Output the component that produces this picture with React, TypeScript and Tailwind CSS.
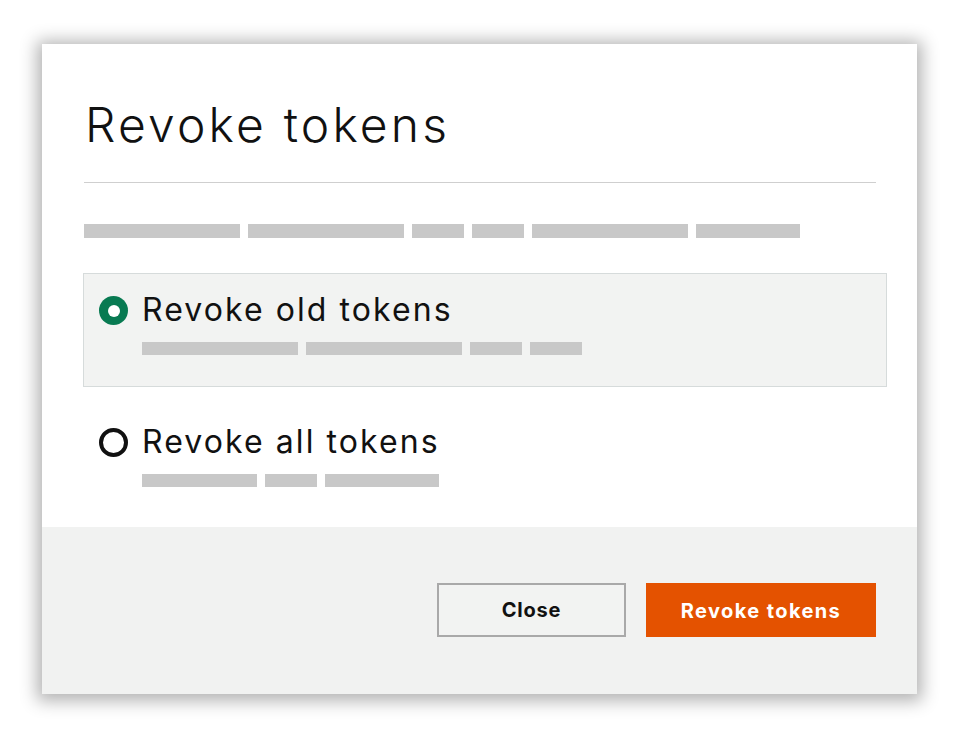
import React from "react";

const Bar = ({ w, h = 14 }: { w: number; h?: number }) => (
  <div className="bg-[#c8c8c8]" style={{ width: w, height: h }} />
);

export default function App() {
  return (
    <div
      className="w-[959px] h-[736px] bg-white pt-[44px] pl-[42px]"
      style={{ fontFamily: "Inter, 'Noto Sans', sans-serif" }}
    >
      <div className="w-[875px] h-[650px] flex flex-col shadow-[0_2px_16px_5px_rgba(0,0,0,0.3)]">
        <div className="flex-1 bg-white pt-[52px] pl-[42px] pr-[30px]">
          <h1 className="text-[48px] leading-[58px] font-light tracking-[0.066em] text-[#111] pl-[1px]">
            Revoke tokens
          </h1>
          <div className="mt-[28px] h-px bg-[#cfcfcf] mr-[11px]" />
          <div className="mt-[41px] flex gap-[8px]">
            <Bar w={156} />
            <Bar w={156} />
            <Bar w={52} />
            <Bar w={52} />
            <Bar w={156} />
            <Bar w={104} />
          </div>
          <div className="mt-[35px] -ml-px border border-[#d6dbdb] bg-[#f2f3f2] h-[114px] pt-[16px] pl-[15px]">
            <div className="flex items-start gap-[14px]">
              <div className="mt-[6px] w-[29px] h-[29px] rounded-full bg-[#087a52] flex items-center justify-center">
                <div className="w-[12px] h-[12px] rounded-full bg-white" />
              </div>
              <div>
                <div className="text-[32px] leading-[40px] tracking-[0.065em] text-[#111]">Revoke old tokens</div>
                <div className="mt-[12px] flex gap-[8px]">
                  <Bar w={156} h={13} />
                  <Bar w={156} h={13} />
                  <Bar w={52} h={13} />
                  <Bar w={52} h={13} />
                </div>
              </div>
            </div>
          </div>
          <div className="mt-[18px] -ml-px border border-transparent pt-[16px] pl-[15px]">
            <div className="flex items-start gap-[14px]">
              <div className="mt-[6px] w-[29px] h-[29px] rounded-full border-[4px] border-[#111]" />
              <div>
                <div className="text-[32px] leading-[40px] tracking-[0.065em] text-[#111]">Revoke all tokens</div>
                <div className="mt-[12px] flex gap-[8px]">
                  <Bar w={115} h={13} />
                  <Bar w={52} h={13} />
                  <Bar w={114} h={13} />
                </div>
              </div>
            </div>
          </div>
        </div>
        <div className="h-[167px] bg-[#f1f2f1] flex justify-end items-start gap-[20px] pt-[56px] pr-[41px]">
          <button className="w-[189px] h-[54px] border-2 border-[#a9a9a9] bg-[#f2f3f2] text-[20px] font-bold tracking-[0.04em] text-[#111] flex items-center justify-center">
            Close
          </button>
          <button className="w-[230px] h-[54px] bg-[#e45200] text-[20px] font-bold tracking-[0.07em] text-white flex items-center justify-center pt-[2px]">
            Revoke tokens
          </button>
        </div>
      </div>
    </div>
  );
}
